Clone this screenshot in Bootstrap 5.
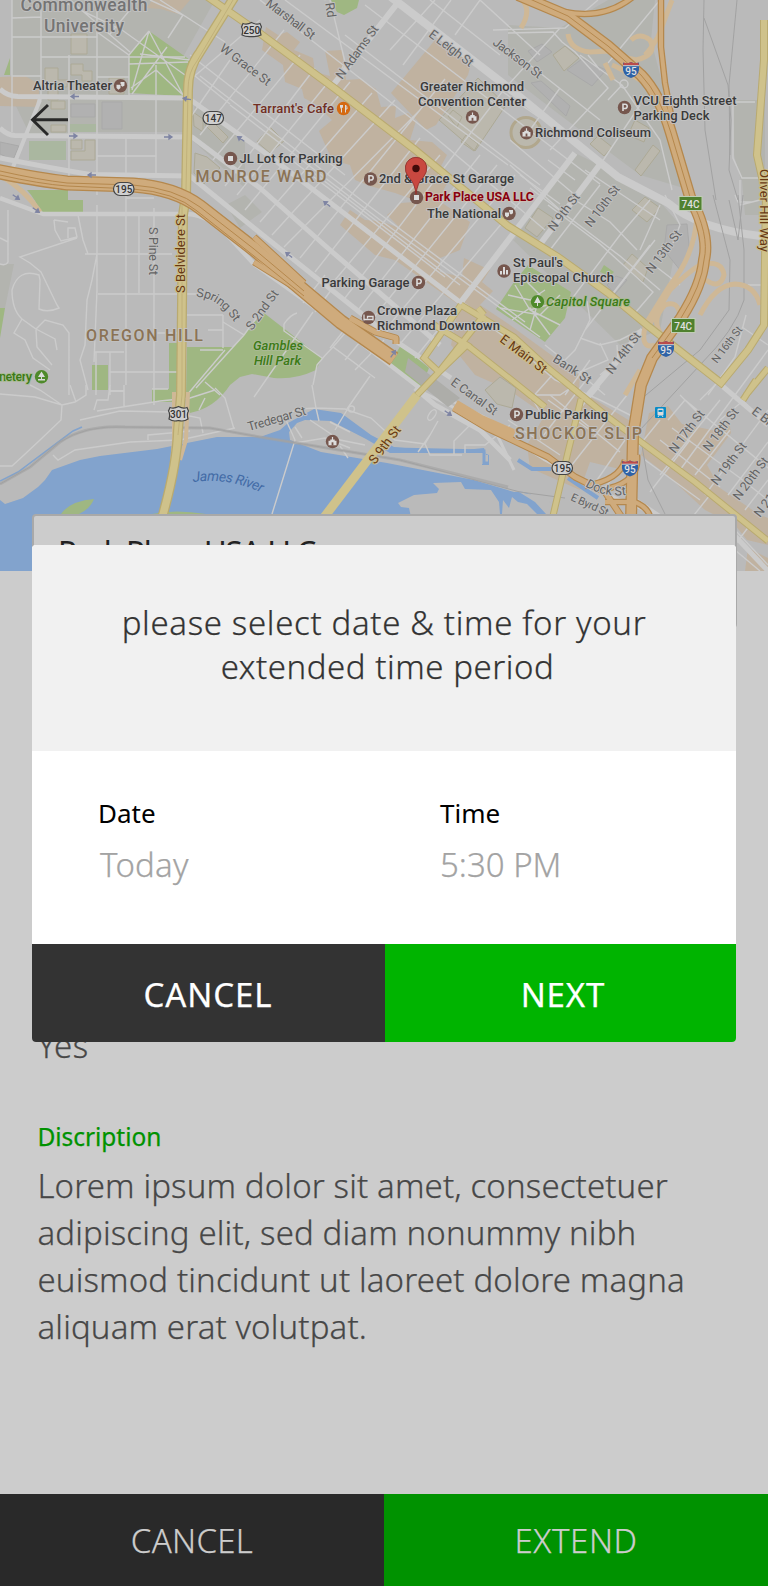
<!DOCTYPE html>
<html lang="en">
<head>
<meta charset="utf-8">
<meta name="viewport" content="width=device-width, initial-scale=1">
<title>Extend parking</title>
<link href="https://cdn.jsdelivr.net/npm/bootstrap@5.3.0/dist/css/bootstrap.min.css" rel="stylesheet">
<style>
body{background:#ccc;font-family:"Noto Sans","Open Sans",sans-serif;font-weight:300;color:#474747}
.screen{width:768px;height:1586px;overflow:hidden}
.map-view{height:571px;flex:none}
.place-card{margin:-57px 31px 0 32px;height:114px;border:2px solid #a9a9a9;border-radius:4px;background:#ccc;padding:14px 24px;font-size:31px;line-height:42px;color:#222;font-weight:400;position:relative;flex:none}
.place-card span{letter-spacing:-1.1px}
.details{padding:0 37.5px;margin-top:395px;font-size:33px;line-height:47px;-webkit-text-stroke:.25px currentColor}
.details h2{font-size:24.5px;line-height:34px;color:#009200;font-weight:400;margin:51px 0 0;letter-spacing:-.05px}
.details p{letter-spacing:.13px;margin-top:8px}
.answer{line-height:46px;letter-spacing:.5px}
.foot-bar{height:92px;flex:none}
.foot-bar .btn,.dialog-foot .btn{border:0;border-radius:0;font-size:33px;line-height:1;color:#ccc;font-weight:300;padding:0;-webkit-text-stroke:.25px currentColor}
.foot-bar .btn-dark{background:#292929;letter-spacing:.3px}
.foot-bar .btn-success{background:#009200;letter-spacing:.6px}
.dialog-box{left:32px;top:545px;width:704px;height:497px;border-radius:4px;overflow:hidden;background:#fff}
.dialog-head{height:206px;background:#f1f1f1;color:#333;font-size:33px;line-height:44px;padding-top:55.5px;-webkit-text-stroke:.25px currentColor}
.q1{letter-spacing:.65px}
.q2{letter-spacing:.55px;padding-left:7px}
.dialog-body{height:193px;padding:44px 66px 0}
.dialog-body label{font-size:26px;line-height:36px;color:#000;font-weight:400;display:block}
.dialog-body .value{font-size:33px;line-height:44px;color:#a3a3a3;margin-top:12px;-webkit-text-stroke:.25px currentColor}
.dialog-body .col-6:first-child .value{padding-left:2px;letter-spacing:.2px}
.dialog-body .col-6:nth-child(2){padding-left:56px}
.dialog-foot{height:98px}
.dialog-foot .btn{color:#fff;font-weight:400;letter-spacing:.9px;padding-top:2px}
.dialog-foot .btn-dark{background:#333;width:353px;padding-right:1px}
.dialog-foot .btn-success{background:#00b400;width:351px;padding-left:5px}
svg text{font-family:Roboto,sans-serif;font-size:13px;fill:#343434;font-weight:500;paint-order:stroke;stroke:#c0c0c0;stroke-width:2px;stroke-linejoin:round}
svg .poi{font-weight:500;stroke:#c2c2c2;fill:#3a3a3a;stroke-width:2px}
svg .st text{font-weight:400;fill:#636363;font-size:12.5px}
svg .hw text{font-weight:400;fill:#673813;stroke:#cec08b;font-size:13px}
svg .area{font-size:16px;fill:#8b7355;font-weight:500}
svg .park{fill:#3b7a16;font-style:italic;font-weight:500;stroke:#a9ba94}
svg .shield text{font-size:10px;fill:#333;stroke:none;text-anchor:middle;font-weight:500}
svg .wht{fill:#e0e0e0!important;stroke:none!important;text-anchor:middle}
.orange-edge{stroke:#b5884d}.orange-fill{stroke:#cfab7c}
.yellow-edge{stroke:#b9aa70}.yellow-fill{stroke:#cfc28b}
</style>
</head>
<body>
<main class="screen position-relative d-flex flex-column">
<section class="map-view">
<svg width="768" height="571" viewBox="0 0 768 571" class="d-block">
<defs>
<g id="parkPin"><circle r="6.7" fill="#76574e"/><path d="M-1.5 3.6V-3.2H.6A2 2 0 0 1 .6 1H-1.5" fill="none" stroke="#dcdcdc" stroke-width="1.6"/></g>
<g id="museum"><circle r="6.7" fill="#76574e"/><path d="M-4 3.8V-.8H-2.2V-2H-.6V-4.4H.6V-2H2.2V-.8H4V3.8Z" fill="#dcdcdc"/><path d="M-.9 3.8V.8H.9V3.8Z" fill="#76574e"/></g>
<g id="drama"><circle r="6.7" fill="#76574e"/><path d="M-4-1H0V2.3L-2 4L-4 2.3ZM0-3.6H4V-.3L2 1L.6 0V-1.8H0Z" fill="#dcdcdc"/></g>
<g id="interstate"><path d="M-8-7.5Q-4-5.500 0-8Q4-5.500 8-7.500V0Q7 6 0 8Q-7 6-8 0Z" fill="#2e62a7"/><path d="M-7.200-7.600Q-4-5.800 0-8Q4-5.800 7.200-7.600L8-4.600H-8Z" fill="#bd4a49"/><path d="M-8-4.300H8" stroke="#d0d0d0"/></g>
<g id="oneway"><path d="M-4 0H4M-4 0L-1-2V2Z" fill="#7e84a3" stroke="#7e84a3" stroke-width="1.3"/></g>
</defs>
<rect width="768" height="571" fill="#bababa"/>
<!-- campus and civic blocks -->
<g fill="#b3b4af">
<path d="M12 0H215L183 57L149 31L129 55V96H12ZM70 98H183V132H70Z"/>
<path d="M195 102L245 140V188L192 140ZM12 98H68V135H30ZM508 25L560 28L608 0H655L651 40L690 190L640 175L560 115L508 75Z"/>
<path d="M514 240L575 153L650 190L680 225L660 330L620 345L508 235ZM226 205L245 195L262 212L240 228ZM0 264H14L5 308H0ZM733 100H765V180H741L734 155ZM742 180H766V215H745Z"/>
</g>
<!-- shopping and dining blocks -->
<g fill="#c0b2a0">
<path d="M0 77L25 76L39 84V107L0 106ZM147 8L152 0H190L178 14L161 9Z"/>
<path d="M266 27L278 35L287 32L300 42L294 50L313 58L315 72L330 76L325 51L342 50L346 80L360 79L376 89L381 107L396 106L395 118L408 113L416 121L410 140L432 142L447 155L440 168L449 180L434 207L395 193L370 186L355 180L350 165L332 160L319 131L332 120L317 105L304 98L302 89L285 82L283 65L262 50Z"/>
<path d="M435 40L471 63L468 75L436 125L426 130L391 93Z"/>
<path d="M340 225L350 210L365 220L380 221L400 228L387 215L401 203L438 200L470 222L460 250L440 258V272L462 277L464 258L490 270L482 282L493 291L480 305L510 325L580 376L579 390L640 427L628 471L590 462L580 490L530 468L527 445L545 415L509 390L475 375L451 345L459 305L395 260L375 255Z"/>
<path d="M649 413L668 406L682 424L717 431L729 421L731 433L707 465L720 488L760 515L768 518V545L747 540L735 525L705 510L667 475L641 455ZM748 548L768 558V571H745Z"/>
</g>
<g fill="#9fb782">
<path d="M149 31L190 60L183 96L129 93V55ZM4 75L10 58V75ZM331 0H359L357 8L344 15L337 12ZM27 190H68V212H40Q36 200 27 190ZM68 200H83V212H68ZM0 308H5L0 338ZM92 365H108V390H92Z"/>
<path d="M187 347H233L258 318L264 313L322 358L316 370Q295 380 274 378L252 374L240 377L230 385Q215 408 190 413L186 398ZM169 343H177V402H152V389H169ZM401 345L429 368L421 387L389 365ZM528 265L571 292L565 318L545 342L496 309L514 282ZM604 265L614 272L610 276L600 272Z"/>
</g>
<!-- river -->
<path d="M0 500L5 504L23 498L38 487L45 480L52 470L80 460L100 456L157 449L217 437H260L280 430L288 423L314 409L341 413L371 435L394 447L415 449L455 451L484 448L486 455H488V464H482V465H489V455L484 453H390L366 439L331 421L305 420L297 423L289 432L290 440L321 452L351 457L387 463L474 480L514 492Q530 489 538 502L551 506V514L540 571H0Z" fill="#82a3cd"/>
<path d="M398 503L414 495L437 493L439 489L433 483L461 482L465 489L491 490L499 502L500 514L411 517L409 508L401 507Z" fill="#bababa"/>
<path d="M61 514Q70 501 94 499Q90 509 79 514ZM152 514Q175 509 206 514Z" fill="#9fb782"/>
<path d="M502 514L503 500L509 508L512 497L518 502L527 504L537 514ZM519 492L535 502L546 514H555L548 498Z" fill="#bababa"/>
<g fill="none" stroke="#82a3cd" stroke-width="3"><path d="M0 481L18 472L73 431L82 427" stroke-width="1.5"/><path d="M394 449L484 451V463H489"/><path d="M518 460L532 469L551 469M568 478L598 498" stroke-width="4"/></g>
<!-- building outlines -->
<g fill="#bbb8ad" stroke="#aca996"><path d="M71 34H87V54H71ZM45 68H58V80H67V87H58V100H48V88H45ZM71 64H83V71H92V81H82V75H71ZM51 101H65V109H51ZM51 125H66V132H51ZM71 140H82V149H71ZM85 140H95V160H71V151H85ZM109 78H124V94H109ZM193 112L203 119V132L194 126ZM205 125L210 119L228 137L223 143ZM195 153L207 157L220 168L204 184L194 173ZM257 142L270 127L284 141L270 153ZM439 120L478 78L506 105L475 151ZM448 116L453 110L462 117L457 127ZM461 142L466 135L478 144L474 151ZM553 55L565 46L579 58L564 71ZM525 228L538 208L553 218L537 237ZM632 210L645 197L660 208L647 222ZM623 265L632 254L648 268L643 282ZM485 390L500 377L516 388L512 408L497 404ZM635 170L653 145L660 151L641 176ZM628 135L635 120L649 128L644 142ZM590 144L598 136L612 147L604 156Z"/><circle cx="526" cy="132.500" r="15" stroke="#b1a78d" stroke-width="3"/></g>
<g fill="#b1b1b1" stroke="#a9a9a9"><path d="M102 102H122V129H102ZM71 104H95V117H71ZM531 83L541 81L570 106L566 116ZM567 70L582 59L606 70L592 86ZM528 51L542 44L552 52L537 62ZM0 142L19 146L13 160L0 154ZM667 225L687 224L690 255L680 270L664 250ZM616 276L627 280L615 294L607 285Z"/></g>
<path d="M70 124H96V132H70ZM29 141H66V160H29Z" fill="#aab7a0"/>
<!-- minor streets -->
<g fill="none" stroke="#cbcbcb" stroke-width="1.4">
<path d="M12 0V132M41 0V95M69 55V176M97 0V195M97 205V290M126 136V385M156 98V176M154 208V405M126 198H154M139 215V293M12 37H97M41 57H185M12 76H41M97 77H129M97 156H156M41 17L12 18M98 294H200M85 254H172M154 333H186M95 352H124M110 372H178M187 315H223M223 315V348M208 330H223M97 290L94 362M110 352V395M97 254L92 280L87 300L85 345L80 360L88 390M78 215L83 240L88 254M110 391H124M96 352V395M152 389H168M8 210V262Q6 266 0 264M0 238L8 242"/>
<path d="M60 0L122 30L185 75M70 0L130 52M120 0L129 11L110 34M150 0L183 15L168 38M160 0L225 42M97 32L129 55L149 31M129 55V95M149 31L132 90M149 31L183 95M129 64L188 62M167 47L132 94M190 60L140 54M156 65V95M156 70L183 95M156 70L131 88"/>
<path d="M54 220L55 230L61 241L77 237L75 228L68 228V238M77 238L20 257L30 263L41 272L57 305L59 308Q48 313 39 309L40 280L39 275Q18 268 12 290Q12 310 22 319L14 333L25 340L33 358L50 370M22 319L36 329L45 320L63 325L69 333V395M36 329L55 339L57 350M36 330L37 347L52 365M54 220L68 222"/>
<path d="M0 394L35 397L62 405L75 402L86 395V385M30 385L40 390L62 405L61 420L40 440L24 455L12 466H0M70 385L76 402M124 385V406M110 391H124M94 410L97 400H108L110 385M97 411L160 401L190 398L215 390M80 420L120 411L170 412L200 418L203 433M148 440V435L170 433L190 431M53 455L58 460L75 450L130 442L180 440L235 428M215 388L225 398L234 429M205 398L199 410"/>
<path d="M190 80L260 20M190 118L230 60M200 135L284 30M213 160L300 55M225 186L315 68M237 195L330 80M245 210L350 82M260 222L372 93M272 235L395 100M284 247L420 110M300 258L445 79M315 272L420 138M330 286L440 155M345 298L505 88M358 310L480 155M370 322L497 165M385 330L515 175M400 344L530 190M415 358L480 278M315 312L340 278M303 303L325 275M330 348L352 320M345 360L370 330M355 370L384 340"/>
<path d="M190 55L345 175M260 0L430 133L545 230M285 0L508 165M330 0L345 62L334 85M345 35L540 185M365 5L428 53L600 184M430 0L500 55M480 0L540 55M403 65L451 0M390 50L435 0M455 35L480 0M200 76L365 203L525 322M190 72L230 104M230 105L380 220L540 337M285 155L445 277M310 170L460 285M530 188L620 256L660 290M548 205L600 244L653 292L635 313M520 175L560 204"/>
<path d="M493 30L565 28L598 0M508 33L553 32L562 42L575 52L608 88L550 150M560 28L508 85M530 65L600 120M580 55L622 85L660 140L672 190M608 63L660 0M600 70L588 55M622 85L608 100M640 105L600 165M560 88L530 130M510 140L575 195M493 85L540 118M510 165L560 210M548 160L575 180"/>
<path d="M571 300L620 235L650 200M600 310L650 245M550 250L600 185M585 330L655 240M640 250L660 205M665 195L680 225L673 243M650 262L680 285M575 200L610 222L637 250M585 170L660 220M587 301L590 320L575 350L560 365M580 338L600 345L620 340L640 330M600 343L608 360L580 372M617 345L618 360L600 375M565 395L590 360M520 350L555 380L600 400L640 420M545 345L570 365L605 395M530 400L555 372M545 420L530 395L560 395L575 385"/>
<path d="M540 440L590 375M560 480L627 395M590 490L625 440M603 490L660 420M508 420L560 455M550 395L620 452M548 400L590 430M668 420L685 400L768 468M672 428L740 478L768 500M660 440L720 487M645 460L700 500M690 440L650 492M720 400L660 475M768 350L680 470M730 430L695 475M768 410L705 495M768 442L728 495M768 480L745 510M690 520L710 495M715 571L750 525M742 400L768 425M700 400L720 380M720 420L750 395M680 395L700 415M735 530L768 565M735 550L760 571"/>
<path d="M770 135H768M733 102H755M733 102V158L742 178H768M740 180V205L760 200M708 395L735 357L746 315M748 285H768M742 327L768 345M735 195L738 202H752"/>
<path d="M347 409L370 376M312 385L316 408L319 421M255 425L300 409L316 408L345 409L371 418L395 440L425 444L430 455H462M425 444L438 421M418 452L430 435M454 454V441L470 425M465 453V445H485L510 425M335 430L347 410M340 446L348 458M295 443L325 438L350 448M286 420L295 440L272 514"/>
<path d="M310 420L340 440L365 445M330 422L350 432M295 427L302 438M254 397L313 312M313 385L317 365Q325 355 333 347L375 378M333 347L345 333M284 324Q290 315 297 313M284 324V331L322 358M196 388L244 335L260 313M205 382L220 395M187 395L225 350M200 350H223M233 347L244 335L223 322"/>
<circle cx="351.500" cy="409" r="3"/><circle cx="624" cy="84" r="4"/><ellipse cx="432" cy="415" rx="3" ry="6" transform="rotate(35 432 415)"/>
<path d="M508 295L530 300L545 290M515 285L530 310L565 300M500 308L540 315L560 295M512 320L530 308L550 335M530 310L560 325M520 275L540 295L530 330"/>
</g>
<!-- secondary streets -->
<g fill="none" stroke="#cbcbcb" stroke-width="5" stroke-linejoin="round">
<path d="M0 89Q7 96 18 96.500L188 98L268 155L461 303L505 335"/>
<path d="M0 128Q7 135 15 135.500L192 137L260 188L330 250L440 345"/>
<path d="M0 158Q50 168 90 174.500L190 176L254 228L397 342L451 378"/>
<path d="M0 198L43 214H187Q210 215 230 238L254 264L321 312L425 392" stroke-width="4.500"/>
<path d="M40 100L13 167M40 98L38 105" stroke-width="4"/>
<path d="M391 -3L514 92L581 147L618 177L668 203Q700 230 768 237" stroke-width="8"/>
<path d="M334 84L400 0M461 302L575 153M541 243L601 163M643 330L580 405M598 385L585 400" stroke-width="6"/>
<path d="M422 392L500 430L545 460L620 500L670 520M434 392L490 420L514 470" stroke-width="3"/>
<path d="M415 388L435 405L480 430L510 460" stroke-width="5"/><path d="M720 384L768 425M720 520L768 571M620 490L665 520" stroke-width="5"/>
</g>
<path d="M408 358L460 398L448 407L405 372Z" fill="#adada9"/>
<!-- rail lines -->
<g fill="none" stroke="#a2a2a2" stroke-width="1"><path d="M704 0L703 50L705 130L716 200M704 18L728 85L731 120L729 170L738 200M737 0L729 85L730 155M713 195L730 260L729 310L700 350L640 400M738 195L744 250V300Q735 330 700 365L640 430M729 200L738 240L743 195M641 440L648 480L665 514M0 484L30 467L60 442Q85 425 125 427L210 428L260 437L400 460L520 492L565 498"/></g>
<g fill="none" stroke="#a2a2a2" stroke-width="3"><path d="M0 484L30 467L60 442Q85 425 125 427L210 428L260 437L400 460L508 487" opacity=".6"/><path d="M92 427v.1M141 427v.1" /></g>
<!-- ramps -->
<g fill="none" stroke="#cfb896" stroke-width="5">
<path d="M521 28Q532 10 522 0M568 34Q570 50 590 52L610 51Q640 65 650 92M631 40Q640 32 650 40Q658 55 636 60Q612 55 608 48M672 0L658 37Q650 50 645 55M605 63L613 80M612 65Q620 68 640 80M697 215Q695 255 670 285L645 325M648 327L670 290Q690 270 702 264Q722 260 724 275Q720 290 706 280M680 315Q678 300 665 305Q650 320 662 335M645 327Q640 350 655 345M700 315Q715 285 735 284Q755 285 760 305M640 370L625 395M0 175Q25 190 40 212"/>
<path d="M174 392V440L172 463M188 392L186 440L180 460" stroke-width="4"/>
</g>
<g fill="none"><g class="yellow-edge" stroke-width="10">
<path d="M240 -12L200 52Q188 68 188 90L186 195L183 215L181 395L178 430Q177 465 162 518"/>
<path d="M205 -5L254 29L334 88L414 149L508 226L558 257L608 293L648 326L721 383L748 350L764 325L766 195L757 155L764 60V20" stroke-width="8"/>
<path d="M461 305L514 337L548 368L608 417L641 442L695 482L768 541" stroke-width="7"/>
<path d="M461 305L424 358L439 372L467 345L431 323M484 315L439 372L417 395L322 520M467 345L514 382L545 407M478 308L484 315M581 399L568 452L552 520M756 380L743 400M768 368L746 395" stroke-width="7"/>
</g><g class="yellow-fill" stroke-width="7.500">
<path d="M240 -12L200 52Q188 68 188 90L186 195L183 215L181 395L178 430Q177 465 162 518"/>
<path d="M205 -5L254 29L334 88L414 149L508 226L558 257L608 293L648 326L721 383L748 350L764 325L766 195L757 155L764 60V20" stroke-width="6"/>
<path d="M461 305L514 337L548 368L608 417L641 442L695 482L768 541" stroke-width="5"/>
<path d="M461 305L424 358L439 372L467 345L431 323M484 315L439 372L417 395M467 345L514 382L545 407M478 308L484 315M581 399L568 452L552 520M756 380L743 400M768 368L746 395" stroke-width="5"/><path d="M417 395L322 520" stroke-width="9"/>
</g><path d="M233 0L197 61Q188 72 188 90L186 190M182 205V395L178 435" stroke="#bcac76" stroke-width=".8"/></g>
<!-- highways -->
<g fill="none" stroke-linejoin="round">
<g class="orange-edge">
<path d="M-5 171Q40 180 67 183L133 185Q175 188 200 207L254 249L304 291L341 322L394 359" stroke-width="15"/>
<path d="M254 237L304 283M254 262L304 293M350 318L375 332L396 338V344M454 408L487 428L548 457L575 477L605 492L621 516" stroke-width="7"/>
<path d="M518 -5L568 16L608 46L641 75Q660 95 671 133L690 197Q710 235 704 260Q702 285 681 318L652 358L641 385L633 435L631 520" stroke-width="12"/>
<path d="M661 -2V47L665 83L672 120M565 12Q605 20 634 -4M585 486Q620 480 625 460M610 488Q640 480 637 455M605 502H635Q647 507 650 516" stroke-width="6.500"/>
</g>
<g class="orange-fill">
<path d="M-5 171Q40 180 67 183L133 185Q175 188 200 207L254 249L304 291L341 322L394 359" stroke-width="12.500"/>
<path d="M254 237L304 283M254 262L304 293M350 318L375 332L396 338V344M454 408L487 428L548 457L575 477L605 492L621 516" stroke-width="5"/>
<path d="M518 -5L568 16L608 46L641 75Q660 95 671 133L690 197Q710 235 704 260Q702 285 681 318L652 358L641 385L633 435L631 520" stroke-width="9.500"/>
<path d="M661 -2V47L665 83L672 120M565 12Q605 20 634 -4M585 486Q620 480 625 460M610 488Q640 480 637 455M605 502H635Q647 507 650 516" stroke-width="4"/>
<path d="M455 405L480 420L514 435" stroke-width="11"/>
</g>
<g class="orange-edge" stroke-width="1"><path d="M0 171Q40 180 67 183L133 185Q175 188 200 207L254 249L304 291M0 175Q40 184 67 186L133 189Q175 192 197 211L254 256L304 296M521 -5L568 16L608 46L641 75Q660 95 671 133L690 197Q710 235 704 260Q702 285 681 318L652 358"/></g>
</g>
<use href="#oneway" x="75" y="96.500"/><use href="#oneway" transform="translate(73 136)rotate(180)"/><use href="#oneway" transform="translate(168 137)rotate(180)"/><use href="#oneway" x="92" y="175"/><use href="#oneway" transform="translate(241 139)rotate(35)"/><use href="#oneway" transform="translate(187 99)rotate(10)"/><use href="#oneway" transform="translate(327 204)rotate(38)"/><use href="#oneway" transform="translate(289 255)rotate(38)"/><use href="#oneway" transform="translate(16 197)rotate(215)"/><use href="#oneway" transform="translate(36 210)rotate(215)"/><use href="#oneway" transform="translate(393 354)rotate(125)"/><use href="#oneway" transform="translate(448 413)rotate(215)"/>
<!-- street names -->
<g class="st">
<text transform="translate(219 50)rotate(37)" textLength="60">W Grace St</text>
<text transform="translate(265 5)rotate(37)" textLength="58">Marshall St</text>
<text transform="translate(324 -6)rotate(82)">k Rd</text>
<text transform="translate(342 80)rotate(-54)" textLength="63">N Adams St</text>
<text transform="translate(428 36)rotate(37)" textLength="52">E Leigh St</text>
<text transform="translate(492 44)rotate(37)" textLength="58">Jackson St</text>
<text transform="translate(149 227)rotate(90)" textLength="48">S Pine St</text>
<path id="spring" d="M196 297Q220 297 238 328" fill="none" stroke="none"/><text><textPath href="#spring" textLength="48">Spring St</textPath></text>
<text transform="translate(252 331)rotate(-54)" textLength="46">S 2nd St</text>
<text transform="translate(450 384)rotate(36)" textLength="54">E Canal St</text>
<text transform="translate(552 361)rotate(33)" textLength="43">Bank St</text>
<text transform="translate(554 232)rotate(-53)" textLength="44">N 9th St</text>
<text transform="translate(591 228)rotate(-53)" textLength="49">N 10th St</text>
<text transform="translate(652 274)rotate(-53)" textLength="50">N 13th St</text>
<text transform="translate(612 375)rotate(-53)" textLength="49">N 14th St</text>
<text transform="translate(717 364)rotate(-53)" textLength="43" style="font-size:11px">N 16th St</text>
<text transform="translate(675 454)rotate(-53)" textLength="50">N 17th St</text>
<text transform="translate(709 452)rotate(-53)" textLength="50">N 18th St</text>
<text transform="translate(717 486)rotate(-53)" textLength="50">N 19th St</text>
<text transform="translate(739 501)rotate(-53)" textLength="50">N 20th St</text>
<text transform="translate(760 518)rotate(-53)" textLength="50">N 21st St</text>
<text transform="translate(751 413)rotate(37)">E Broad St</text>
<text transform="translate(249 431)rotate(-16)" textLength="60">Tredegar St</text>
<path id="dock" d="M585 486Q605 499 632 494" fill="none" stroke="none"/><text><textPath href="#dock">Dock St</textPath></text>
<text transform="translate(570 500)rotate(24)" textLength="40" style="font-size:11px">E Byrd St</text>
<path id="james" d="M193 482Q232 477 266 495" fill="none" stroke="none"/><text style="fill:#426ba6;stroke:none;font-style:italic;font-size:14px"><textPath href="#james" textLength="70">James River</textPath></text>
</g>
<g class="hw">
<text transform="translate(185 293)rotate(-90)" textLength="79">S Belvidere St</text>
<text transform="translate(759.500 169)rotate(90)" textLength="83">Oliver Hill Way</text>
<text transform="translate(499 341)rotate(37)" textLength="55">E Main St</text>
<text transform="translate(375 465)rotate(-53)" textLength="44">S 9th St</text>
</g>
<!-- area names -->
<text x="20.500" y="11" textLength="127" style="font-size:17.500px;fill:#747474">Commonwealth</text><text x="44" y="31.500" textLength="80" style="font-size:17.500px;fill:#747474">University</text>
<text class="area" x="195.500" y="182.300" textLength="131">MONROE WARD</text>
<text class="area" x="86" y="340.600" textLength="117">OREGON HILL</text>
<text class="area" x="515" y="438.500" textLength="127">SHOCKOE SLIP</text>
<!-- places -->
<g class="places">
<text class="poi" x="33" y="90" textLength="79">Altria Theater</text>
<text class="poi" x="253" y="112.500" textLength="81" style="fill:#722f23">Tarrant's Cafe</text>
<text class="poi" x="239.500" y="162.700" textLength="103">JL Lot for Parking</text>
<text class="poi" x="420" y="90.700" textLength="104">Greater Richmond</text>
<text class="poi" x="418" y="105.800" textLength="108">Convention Center</text>
<text class="poi" x="379" y="183" textLength="135">2nd &amp; Grace St Gararge</text>
<text class="poi" x="427" y="218" textLength="74">The National</text>
<text class="poi" x="633.500" y="104.700" textLength="103">VCU Eighth Street</text>
<text class="poi" x="633.500" y="119.800" textLength="76">Parking Deck</text>
<text class="poi" x="535" y="137" textLength="116">Richmond Coliseum</text>
<text class="poi" x="321.500" y="286.800" textLength="88">Parking Garage</text>
<text class="poi" x="377" y="314.800" textLength="80">Crowne Plaza</text>
<text class="poi" x="377" y="329.800" textLength="123">Richmond Downtown</text>
<text class="poi" x="513" y="266.500" textLength="50">St Paul's</text>
<text class="poi" x="513" y="281.500" textLength="101">Episcopal Church</text>
<text class="poi" x="525" y="418.700" textLength="83">Public Parking</text>
<text class="park" x="546" y="305.700" textLength="84">Capitol Square</text>
<text class="park" x="253" y="350" textLength="50">Gambles</text><text class="park" x="254" y="365" textLength="47">Hill Park</text>
<text class="park" x="-1" y="380.500" textLength="33" style="font-style:normal">netery</text>
<text x="425" y="201.300" textLength="109" style="fill:#89000f;font-weight:700;font-size:12.500px;stroke:#cbbfb5">Park Place USA LLC</text>
</g>
<use href="#parkPin" x="370.500" y="179"/><use href="#parkPin" x="624.500" y="107.500"/><use href="#parkPin" x="418.500" y="282.500"/><use href="#parkPin" x="516.500" y="414.500"/>
<use href="#museum" x="472.500" y="117"/><use href="#museum" x="526.500" y="132.700"/><use href="#museum" x="332.500" y="441.500"/>
<use href="#drama" x="120.500" y="85.700"/><use href="#drama" x="509" y="213.500"/>
<g transform="translate(230.500 158.500)"><circle r="6.700" fill="#76574e"/><path d="M-2.500-2.500H2.500V2.500H-2.500Z" fill="#dcdcdc"/></g>
<g transform="translate(416.500 197.500)"><circle r="6.700" fill="#76574e"/><path d="M-2.500-2.500H2.500V2.500H-2.500Z" fill="#dcdcdc"/></g>
<g transform="translate(368.500 317.500)"><circle r="6.700" fill="#76574e"/><path d="M-4.500-3V3M-4.500 2H4.500V-1H-1V1M4.500 3V-1" fill="none" stroke="#dcdcdc" stroke-width="1.300"/></g>
<g transform="translate(504 271)"><circle r="6.700" fill="#76574e"/><path d="M-4 3.500V0H-2V3.500ZM-1 3.500V-4H1V3.500ZM2 3.500V-1H4V3.500Z" fill="#dcdcdc"/></g>
<g transform="translate(343.500 108.500)"><circle r="6.700" fill="#d46a12"/><path d="M-3-3.500V-1Q-3 0-2 0V4M-1-3.500V-1L-2 0M-2-3.500V0M2 4V-3.500Q4-2 3.500.500H2" fill="none" stroke="#dcdcdc"/></g>
<g fill="#4f8a2b"><circle cx="41.500" cy="376.700" r="6.700"/><circle cx="537.500" cy="301.800" r="6.700"/></g>
<path d="M41.500 371.500L45 377H42V379H45V380.500H38V379H41V377H38ZM537.500 296.500L541 303H538V306H537V303H534Z" fill="#dcdcdc"/>
<!-- route markers -->
<g class="shield">
<g fill="#cfcfcf" stroke="#444" stroke-width="1.200"><rect x="203" y="111.500" width="20.500" height="13" rx="6.500"/><rect x="113.500" y="182.500" width="20.500" height="13" rx="6.500"/><rect x="552" y="461.500" width="20.500" height="13" rx="6.500"/>
<path d="M243 23.500Q247 25 251.500 22.500Q256 25 260 23.500L261.500 27Q259.500 30 261 35Q257 37 251.500 36.500Q246 37 242 35Q243.500 30 241.500 27ZM170 407.500Q174 409 178.500 406.500Q183 409 187 407.500L188.500 411Q186.500 414 188 419Q184 422 178.500 420.500Q173 422 169 419Q170.500 414 168.500 411Z"/></g>
<text x="213.300" y="121.600">147</text><text x="123.800" y="192.600">195</text><text x="562.300" y="471.600">195</text><text x="251.700" y="33.600">250</text><text x="178.500" y="418">301</text>
<use href="#interstate" x="631" y="70"/><use href="#interstate" x="666" y="349"/><use href="#interstate" x="630" y="468.500"/>
<text class="wht" x="631" y="74.500">95</text><text class="wht" x="666" y="353.500">95</text><text class="wht" x="630" y="473">95</text>
<g fill="#50812f" stroke="#c0ceb5"><rect x="679" y="196.500" width="23" height="14"/><rect x="671.500" y="318.500" width="23.500" height="14"/></g>
<text class="wht" x="690.500" y="207.500">74C</text><text class="wht" x="683.200" y="329.500">74C</text>
</g>
<g><rect x="655" y="407" width="11" height="11" rx="1" fill="#078bc7"/><rect x="657.500" y="408.500" width="6" height="7" rx="1" fill="#dcdcdc"/><path d="M658.500 411H662.500" stroke="#078bc7" stroke-width="2"/><path d="M658 417L659 415.500M663 417L662 415.500" stroke="#dcdcdc"/></g>
<!-- selected place -->
<path d="M416 194.500Q415 183 408.500 177Q404.500 172 405.500 166A10.700 10.700 0 0 1 426.500 166Q427.500 172 423.500 177Q417 183 416 194.500Z" fill="#c94840" stroke="#91322e" stroke-width=".9"/><circle cx="416" cy="168.500" r="3.700" fill="#400b0a"/>
<path d="M68 119.800H33M48 105L32.500 119.800L48 135" fill="none" stroke="#292929" stroke-width="2.900"/>
</svg>
</section>
<section class="place-card"><span>Park Place USA LLC</span></section>
<section class="details flex-grow-1">
<div class="answer">Yes</div>
<h2>Discription</h2>
<p class="mb-0 text-nowrap">Lorem ipsum dolor sit amet, consectetuer<br>adipiscing elit, sed diam nonummy nibh<br>euismod tincidunt ut laoreet dolore magna<br>aliquam erat volutpat.</p>
</section>
<footer class="foot-bar d-flex"><button class="btn btn-dark w-50">CANCEL</button><button class="btn btn-success w-50">EXTEND</button></footer>
<div class="dialog-box position-absolute" role="dialog">
<div class="dialog-head text-center text-nowrap"><span class="q1">please select date &amp; time for your</span><br><span class="q2">extended time period</span></div>
<div class="dialog-body"><div class="row gx-0"><div class="col-6"><label>Date</label><div class="value">Today</div></div><div class="col-6"><label>Time</label><div class="value">5:30 PM</div></div></div></div>
<div class="dialog-foot d-flex"><button class="btn btn-dark">CANCEL</button><button class="btn btn-success">NEXT</button></div>
</div>
</main>
<script src="https://cdn.jsdelivr.net/npm/bootstrap@5.3.0/dist/js/bootstrap.bundle.min.js"></script>
</body>
</html>
